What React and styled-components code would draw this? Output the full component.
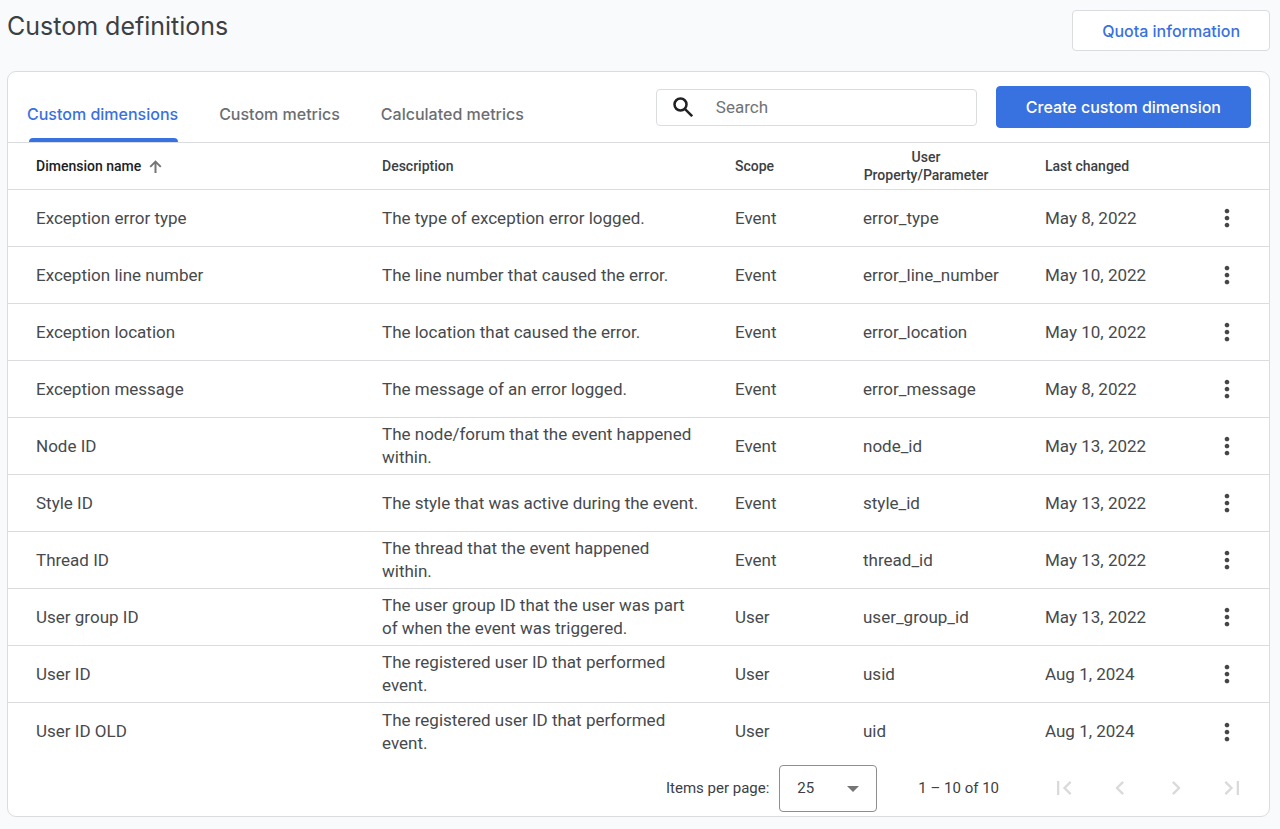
import React from "react";
import styled, { createGlobalStyle } from "styled-components";
import {
  MdChevronLeft,
  MdChevronRight,
  MdFirstPage,
  MdLastPage,
  MdMoreVert,
} from "react-icons/md";

const display = `"Google Sans", "Inter", "Open Sans", sans-serif`;
const blue = "#3871e0";
const line = "#dadce0";

const GlobalStyle = createGlobalStyle`
  *, *::before, *::after { box-sizing: border-box; }
  body {
    margin: 0;
    background: #f8fafc;
    color: #474a4d;
    font-family: Roboto, "Liberation Sans", sans-serif;
    font-size: 17px;
  }
  button, input, select { font: inherit; margin: 0; }
`;

const Page = styled.main`
  min-height: 100vh;
  padding: 10px 10px 12px 7px;
`;

const PageHeader = styled.header`
  display: flex;
  justify-content: space-between;
  align-items: flex-start;
  margin-bottom: 20px;
`;

const Title = styled.h1`
  margin: 0;
  font: 400 25px/32px ${display};
  color: #3c4043;
`;

const Button = styled.button`
  height: ${(p) => (p.$primary ? 42 : 41)}px;
  padding: 0 29px;
  border: 1px solid ${(p) => (p.$primary ? blue : line)};
  border-radius: 4px;
  background: ${(p) => (p.$primary ? blue : "#fff")};
  color: ${(p) => (p.$primary ? "#fff" : blue)};
  font: 500 16px/24px ${display};
  white-space: nowrap;
  cursor: pointer;
`;

const Card = styled.section`
  border: 1px solid ${line};
  border-radius: 9px;
  background: #fff;
  overflow: hidden;
`;

const Toolbar = styled.div`
  display: flex;
  justify-content: space-between;
  height: 71px;
  padding: 0 18px 0 19px;
  border-bottom: 1px solid ${line};
`;

const Tabs = styled.nav`
  display: flex;
  gap: 41px;
`;

const Tab = styled.button`
  position: relative;
  padding: 14px 0 0;
  border: 0;
  background: none;
  color: ${(p) => (p.$active ? blue : "#6b6e72")};
  font: 500 16px/24px ${display};
  white-space: nowrap;
  cursor: pointer;

  &::after {
    content: "";
    display: ${(p) => (p.$active ? "block" : "none")};
    position: absolute;
    left: 2px;
    right: 0;
    bottom: 0;
    height: 4px;
    border-radius: 4px 4px 0 0;
    background: ${blue};
  }
`;

const Actions = styled.div`
  display: flex;
  align-items: center;
  gap: 19px;
`;

const SearchBox = styled.label`
  display: flex;
  align-items: center;
  gap: 23px;
  width: 321px;
  height: 37px;
  padding: 0 16px;
  border: 1px solid ${line};
  border-radius: 4px;
  color: #202124;
`;

const SearchInput = styled.input`
  flex: 1;
  min-width: 0;
  padding: 0;
  border: 0;
  outline: 0;
  background: none;
  color: #202124;

  &::placeholder {
    color: #707376;
    opacity: 1;
  }
`;

const Table = styled.table`
  width: 100%;
  border-collapse: separate;
  border-spacing: 0;
  table-layout: fixed;
`;

const Col = styled.col`
  width: ${(p) => p.$width};
`;

const HeadCell = styled.th`
  height: 47px;
  padding: 0;
  border-bottom: 1px solid ${line};
  text-align: left;
  font-size: 14px;
  font-weight: 500;
  line-height: 18px;
  color: ${(p) => (p.$sorted ? "#202124" : "#3c4043")};

  &:first-child { padding-left: 28px; }
`;

const SortButton = styled.button`
  display: flex;
  align-items: center;
  gap: 8px;
  max-width: ${(p) => (p.$sorted ? "none" : "126px")};
  padding: 0;
  border: 0;
  background: none;
  color: inherit;
  text-align: center;
  cursor: pointer;

  svg {
    flex: none;
    color: #757575;
  }
`;

const Cell = styled.td`
  height: 57px;
  padding: 0 ${(p) => (p.$wrap ? 35 : 0)}px 0 0;
  border-bottom: 1px solid ${line};
  line-height: 23px;

  &:first-child { padding-left: 28px; }
  tr:last-child > & { border-bottom: 0; }
`;

const IconButton = styled.button`
  display: flex;
  align-items: center;
  justify-content: center;
  width: 28px;
  height: 28px;
  margin: 0 ${(p) => (p.$menu ? "auto" : "0")};
  padding: 0;
  border: 0;
  background: none;
  color: ${(p) => (p.disabled ? "#dadada" : "#444746")};
  cursor: pointer;
`;

const Footer = styled.footer`
  display: flex;
  align-items: center;
  justify-content: flex-end;
  height: 56px;
  padding-right: 23px;
  font-size: 15px;
  color: #3c4043;
`;

const PageSize = styled.label`
  display: flex;
  align-items: center;
  gap: 10px;
`;

const SelectBox = styled.span`
  position: relative;
  width: 98px;
  height: 47px;

  svg {
    position: absolute;
    right: 18px;
    top: 21px;
    pointer-events: none;
    fill: #757575;
  }
`;

const Select = styled.select`
  width: 100%;
  height: 100%;
  padding: 0 17px;
  border: 1px solid #8e8e8e;
  border-radius: 4px;
  appearance: none;
  background: #fff;
  color: #3c4043;
`;

const Range = styled.span`
  margin: 0 51px 0 41px;
`;

const Pager = styled.div`
  display: flex;
  gap: 28px;
`;

const tabs = ["Custom dimensions", "Custom metrics", "Calculated metrics"];

const rows = [
  ["Exception error type", "The type of exception error logged.", "Event", "error_type", "May 8, 2022"],
  ["Exception line number", "The line number that caused the error.", "Event", "error_line_number", "May 10, 2022"],
  ["Exception location", "The location that caused the error.", "Event", "error_location", "May 10, 2022"],
  ["Exception message", "The message of an error logged.", "Event", "error_message", "May 8, 2022"],
  ["Node ID", "The node/forum that the event happened within.", "Event", "node_id", "May 13, 2022"],
  ["Style ID", "The style that was active during the event.", "Event", "style_id", "May 13, 2022"],
  ["Thread ID", "The thread that the event happened within.", "Event", "thread_id", "May 13, 2022"],
  ["User group ID", "The user group ID that the user was part of when the event was triggered.", "User", "user_group_id", "May 13, 2022"],
  ["User ID", "The registered user ID that performed event.", "User", "usid", "Aug 1, 2024"],
  ["User ID OLD", "The registered user ID that performed event.", "User", "uid", "Aug 1, 2024"],
];

const columns = ["Dimension name", "Description", "Scope", "User Property/Parameter", "Last changed"];
const widths = ["auto", "353px", "128px", "182px", "140px", "84px"];

const pagerButtons = [
  ["First page", MdFirstPage],
  ["Previous page", MdChevronLeft],
  ["Next page", MdChevronRight],
  ["Last page", MdLastPage],
];

function SearchIcon() {
  return (
    <svg width="20" height="20" viewBox="0 0 20 20" fill="none" stroke="currentColor" strokeWidth="2.5" aria-hidden="true">
      <circle cx="7.5" cy="7.5" r="6" />
      <path d="M11.8 11.8l7.4 7.4" />
    </svg>
  );
}

function SortArrow() {
  return (
    <svg width="13" height="13" viewBox="0 0 13 13" fill="none" stroke="currentColor" strokeWidth="2" aria-hidden="true">
      <path d="M6.5 13V1.5M1.2 6.9l5.3-5.3 5.3 5.3" />
    </svg>
  );
}

export default function App() {
  return (
    <>
      <GlobalStyle />
      <Page>
        <PageHeader>
          <Title>Custom definitions</Title>
          <Button type="button">Quota information</Button>
        </PageHeader>
        <Card>
          <Toolbar>
            <Tabs>
              {tabs.map((label, i) => (
                <Tab key={label} type="button" $active={i === 0}>{label}</Tab>
              ))}
            </Tabs>
            <Actions>
              <SearchBox>
                <SearchIcon />
                <SearchInput type="text" placeholder="Search" aria-label="Search" />
              </SearchBox>
              <Button type="button" $primary>Create custom dimension</Button>
            </Actions>
          </Toolbar>
          <Table>
            <colgroup>
              {widths.map((width, i) => <Col key={i} $width={width} />)}
            </colgroup>
            <thead>
              <tr>
                {columns.map((label, i) => (
                  <HeadCell key={label} scope="col" $sorted={i === 0} aria-sort={i === 0 ? "ascending" : undefined}>
                    <SortButton type="button" $sorted={i === 0}>
                      {label}
                      {i === 0 && <SortArrow />}
                    </SortButton>
                  </HeadCell>
                ))}
                <HeadCell as="td" />
              </tr>
            </thead>
            <tbody>
              {rows.map((row) => (
                <tr key={row[0]}>
                  {row.map((text, i) => <Cell key={i} $wrap={i === 1}>{text}</Cell>)}
                  <Cell>
                    <IconButton type="button" $menu aria-label={`Actions for ${row[0]}`}>
                      <MdMoreVert size={28} />
                    </IconButton>
                  </Cell>
                </tr>
              ))}
            </tbody>
          </Table>
          <Footer>
            <PageSize>
              Items per page:
              <SelectBox>
                <Select defaultValue="25">
                  <option>10</option>
                  <option>25</option>
                  <option>50</option>
                </Select>
                <svg width="12" height="6" viewBox="0 0 12 6" aria-hidden="true">
                  <path d="M0 0h12L6 6z" />
                </svg>
              </SelectBox>
            </PageSize>
            <Range>1 – 10 of 10</Range>
            <Pager>
              {pagerButtons.map(([label, Icon]) => (
                <IconButton key={label} type="button" disabled aria-label={label}>
                  <Icon size={28} />
                </IconButton>
              ))}
            </Pager>
          </Footer>
        </Card>
      </Page>
    </>
  );
}
